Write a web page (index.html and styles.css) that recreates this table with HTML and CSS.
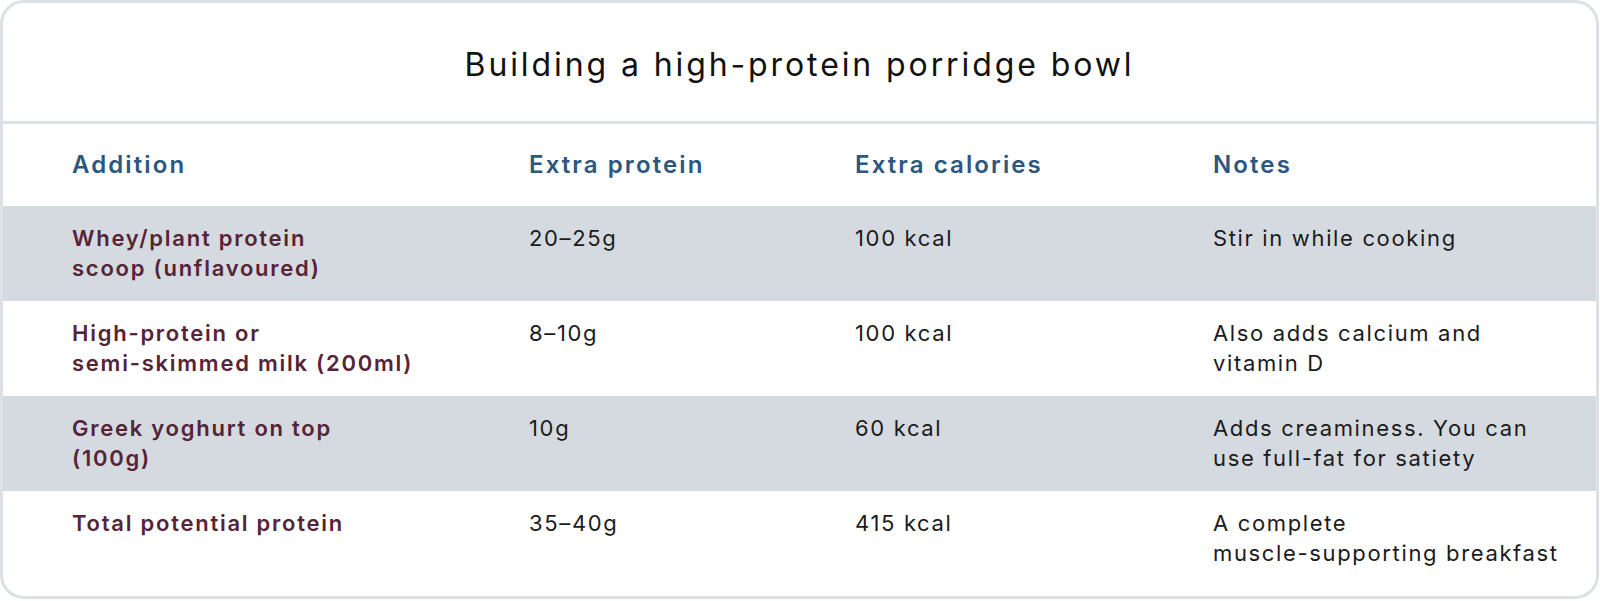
FILE: index.html
```html
<!DOCTYPE html>
<html lang="en">
<head>
<meta charset="utf-8">
<title>Building a high-protein porridge bowl</title>
<link rel="stylesheet" href="styles.css">
</head>
<body>
<div class="card">
  <div class="title">Building a high-protein porridge bowl</div>
  <div class="table">
    <div class="row head">
      <div class="cell">Addition</div>
      <div class="cell">Extra protein</div>
      <div class="cell">Extra calories</div>
      <div class="cell">Notes</div>
    </div>
    <div class="row shade">
      <div class="cell name">Whey/plant protein<br>scoop (unflavoured)</div>
      <div class="cell">20–25g</div>
      <div class="cell">100 kcal</div>
      <div class="cell">Stir in while cooking</div>
    </div>
    <div class="row">
      <div class="cell name">High-protein or<br>semi-skimmed milk (200ml)</div>
      <div class="cell">8–10g</div>
      <div class="cell">100 kcal</div>
      <div class="cell">Also adds calcium and<br>vitamin D</div>
    </div>
    <div class="row shade">
      <div class="cell name">Greek yoghurt on top<br>(100g)</div>
      <div class="cell">10g</div>
      <div class="cell">60 kcal</div>
      <div class="cell">Adds creaminess. You can<br>use full-fat for satiety</div>
    </div>
    <div class="row last">
      <div class="cell name">Total potential protein</div>
      <div class="cell">35–40g</div>
      <div class="cell">415 kcal</div>
      <div class="cell">A complete<br>muscle-supporting breakfast</div>
    </div>
  </div>
</div>
</body>
</html>
```
FILE: styles.css
```css
* { box-sizing: border-box; }
html, body { margin: 0; padding: 0; background: #ffffff; }
body {
  font-family: Inter, "Open Sans", sans-serif;
  color: #1b1b1b;
}
.card {
  width: 1599px;
  height: 599px;
  border: 3px solid #dde1e6;
  border-radius: 24px;
  overflow: hidden;
  background: #ffffff;
}
.title {
  height: 121px;
  display: flex;
  align-items: center;
  justify-content: center;
  padding-top: 4px;
  font-size: 32px;
  font-weight: 400;
  color: #111111;
  letter-spacing: 2.9px;
  border-bottom: 3px solid #dde1e6;
}
.row {
  display: grid;
  grid-template-columns: 457px 326px 358px 1fr;
  height: 95px;
  padding: 17px 0 0 69px;
  font-size: 22px;
  line-height: 30px;
  letter-spacing: 1.65px;
  white-space: nowrap;
}
.row.head {
  height: 82px;
  padding-top: 26px;
  font-size: 24px;
  font-weight: 600;
  letter-spacing: 2.1px;
  color: #2b5780;
}
.row.shade { background: #d5dae0; }
.row.last { height: 105px; }
.name {
  font-weight: 600;
  letter-spacing: 1.75px;
  color: #562437;
}
```
